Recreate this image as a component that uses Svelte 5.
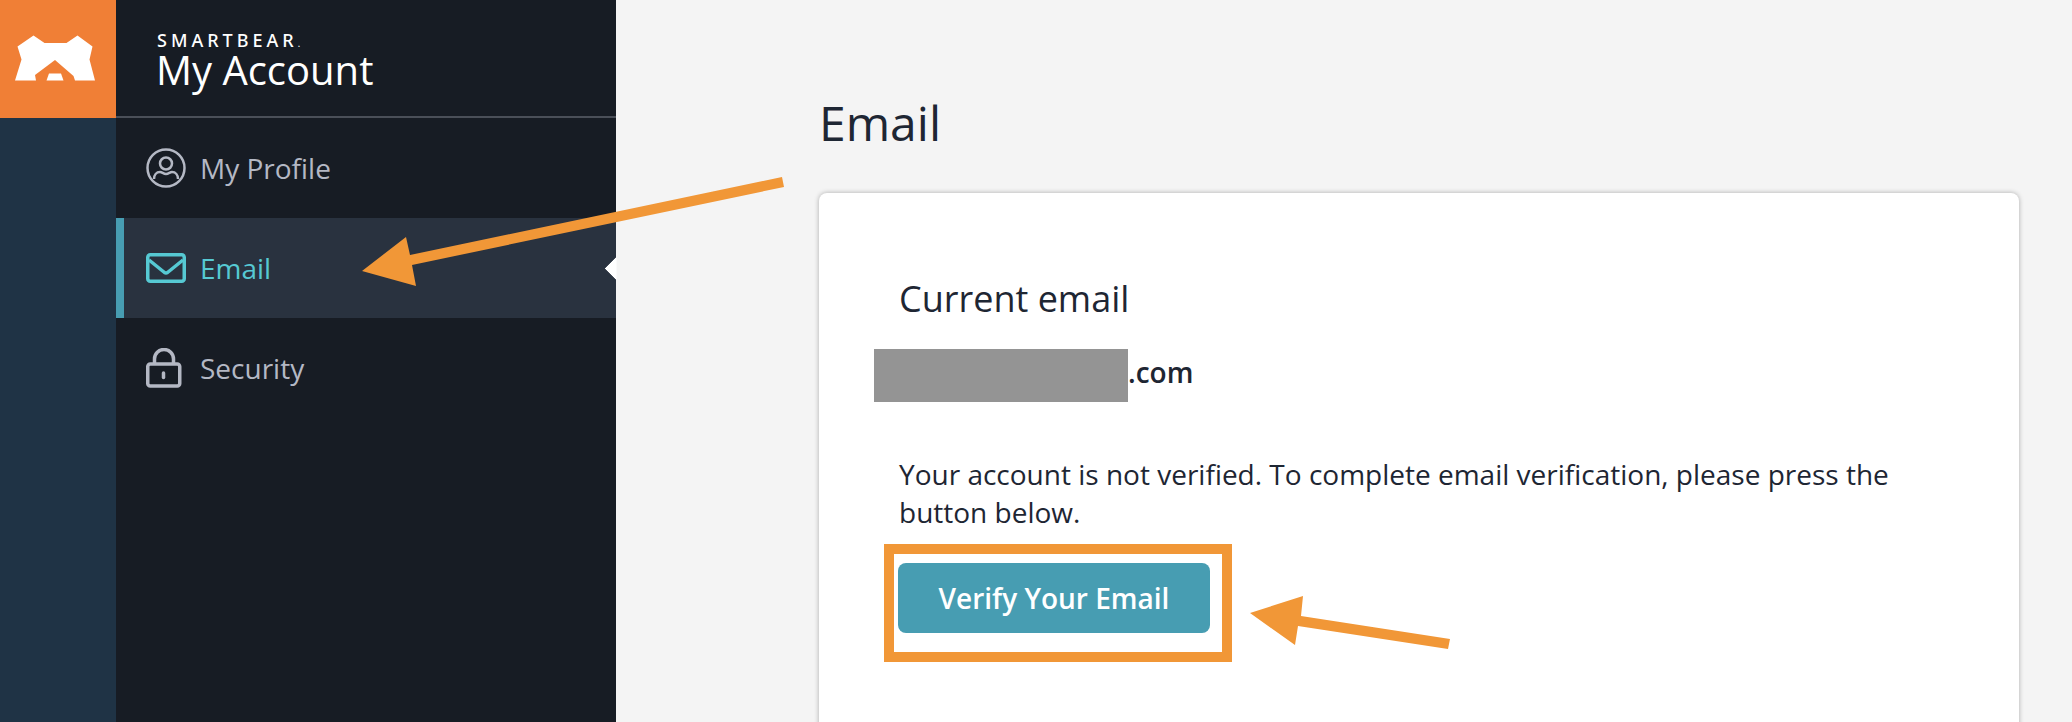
<script>
  const items = [
    { label: 'My Profile', icon: 'user' },
    { label: 'Email', icon: 'mail', active: true },
    { label: 'Security', icon: 'lock' }
  ];
</script>

<div class="page">
  <div class="rail">
    <div class="logo">
      <svg width="116" height="118" viewBox="0 0 116 118">
        <path fill="#fff" d="M33.500 35.500 44.500 43H66.500L77.500 35.500 92.500 46.500 89.500 59.500 95 80.500H75L73.500 76 55 60 35 75 36 80.500H15L21.500 59.500 17.500 46.500Z" />
        <path fill="#fff" d="M49 73.500H61L63.500 80.500H46.500Z" />
      </svg>
    </div>
  </div>
  <nav class="sidebar">
    <header class="brand">
      <div class="maker">SMARTBEAR<span class="tm">.</span></div>
      <div class="product">My Account</div>
    </header>
    {#each items as item}
      <div class="item" class:active={item.active}>
        <span class="icon">
          {#if item.icon === 'user'}
            <svg width="40" height="40" viewBox="0 0 40 40" fill="none" stroke="currentColor" stroke-width="2.500">
              <circle cx="20" cy="20" r="18.500" />
              <circle cx="20" cy="15.500" r="6" />
              <path d="M8 31c0-4 2.500-7 6-7 2 0 3.500 2 6 2s4-2 6-2c3.500 0 6 3 6 7" />
            </svg>
          {:else if item.icon === 'mail'}
            <svg width="40" height="30" viewBox="0 0 40 30" fill="none" stroke="currentColor" stroke-width="3.500" stroke-linejoin="round">
              <rect x="1.750" y="1.750" width="36.500" height="26.500" rx="2.500" />
              <path d="M3 7 18.500 19.500q1.500 1 3 0L37 7" />
            </svg>
          {:else}
            <svg width="36" height="40" viewBox="0 0 36 40" fill="none" stroke="currentColor" stroke-width="3.500">
              <path d="M8.500 16V11a9.500 9.500 0 0 1 19 0v5" />
              <rect x="1.750" y="16" width="32" height="22" rx="2.500" />
              <path d="M17.500 25v4.500" stroke-linecap="round" stroke-width="3.500" />
            </svg>
          {/if}
        </span>
        <span>{item.label}</span>
      </div>
    {/each}
  </nav>
  <main class="main">
    <h1>Email</h1>
    <section class="card">
      <h2>Current email</h2>
      <p class="address"><span class="redacted"></span>.com</p>
      <p class="note">Your account is not verified. To complete email verification, please press the button below.</p>
      <span class="frame"><button type="button">Verify Your Email</button></span>
    </section>
  </main>
  <svg class="marks" width="2072" height="722" viewBox="0 0 2072 722">
    <path fill="#f19737" d="M362 271 406 237 410 255 782 177 784 187 412 265 416 286Z" />
    <path fill="#f19737" d="M1250 613 1303 596 1301 616 1450 639 1448 649 1298 626 1295 645Z" />
  </svg>
</div>

<style>
  :global(body) {
    margin: 0;
    background: #f4f4f4;
  }

  .page {
    position: relative;
    display: flex;
    width: 2072px;
    height: 722px;
    overflow: hidden;
    font-family: "Open Sans", sans-serif;
    color: #1e2633;
  }

  .rail {
    flex: 0 0 116px;
    background: #1f3345;
  }

  .logo {
    height: 118px;
    background: #f07f36;
  }

  .logo svg {
    display: block;
  }

  .sidebar {
    flex: 0 0 500px;
    background: #171c24;
    color: #b4b8c4;
  }

  .brand {
    box-sizing: border-box;
    height: 118px;
    padding: 32px 0 0 41px;
    border-bottom: 2px solid #4a4f58;
    color: #fff;
  }

  .maker {
    font-family: "Noto Sans", sans-serif;
    font-size: 18px;
    font-weight: 500;
    line-height: 16px;
    letter-spacing: 4px;
  }

  .tm {
    font-size: 9px;
    letter-spacing: 0;
  }

  .product {
    margin-left: -1px;
    font-size: 40px;
    line-height: 36px;
  }

  .item {
    display: flex;
    align-items: center;
    height: 100px;
    padding-left: 30px;
    font-size: 28px;
    position: relative;
  }

  .icon {
    display: flex;
    flex: 0 0 40px;
    margin-right: 14px;
  }

  .active {
    box-sizing: border-box;
    padding-left: 22px;
    border-left: 8px solid #479db2;
    background: #29323f;
    color: #56c9d3;
  }

  .active::after {
    content: "";
    position: absolute;
    right: -8.500px;
    top: 41.500px;
    width: 17px;
    height: 17px;
    background: #fff;
    transform: rotate(45deg);
    clip-path: polygon(0 0, 0 100%, 100% 100%);
  }

  .main {
    flex: 1;
    padding: 0 53px 0 203px;
  }

  h1 {
    margin: 0;
    padding-top: 91px;
    font-size: 48px;
    font-weight: 400;
    line-height: 64px;
  }

  .card {
    box-sizing: border-box;
    height: 600px;
    margin-top: 38px;
    padding: 84px 120px 0 80px;
    border-radius: 8px;
    background: #fff;
    box-shadow: 0 0 5px rgba(0, 0, 0, 0.3);
  }

  h2 {
    margin: 0;
    font-size: 36px;
    font-weight: 400;
    line-height: 44px;
  }

  .address {
    display: flex;
    align-items: flex-start;
    margin: 28px 0 0 -25px;
    font-size: 28px;
    font-weight: 600;
    line-height: 47px;
  }

  .redacted {
    display: block;
    width: 254px;
    height: 53px;
    background: #949494;
  }

  .note {
    margin: 53px 0 0;
    font-size: 28px;
    line-height: 38px;
  }

  .frame {
    display: inline-block;
    box-sizing: border-box;
    width: 348px;
    height: 118px;
    margin: 13px 0 0 -15px;
    padding: 9px 0 0 4px;
    border: 10px solid #f19737;
  }

  button {
    display: block;
    width: 312px;
    height: 70px;
    padding: 0;
    border: 0;
    border-radius: 8px;
    background: #479db2;
    color: #fff;
    font: 600 28px "Open Sans", sans-serif;
  }

  .marks {
    position: absolute;
    inset: 0;
    pointer-events: none;
  }
</style>
